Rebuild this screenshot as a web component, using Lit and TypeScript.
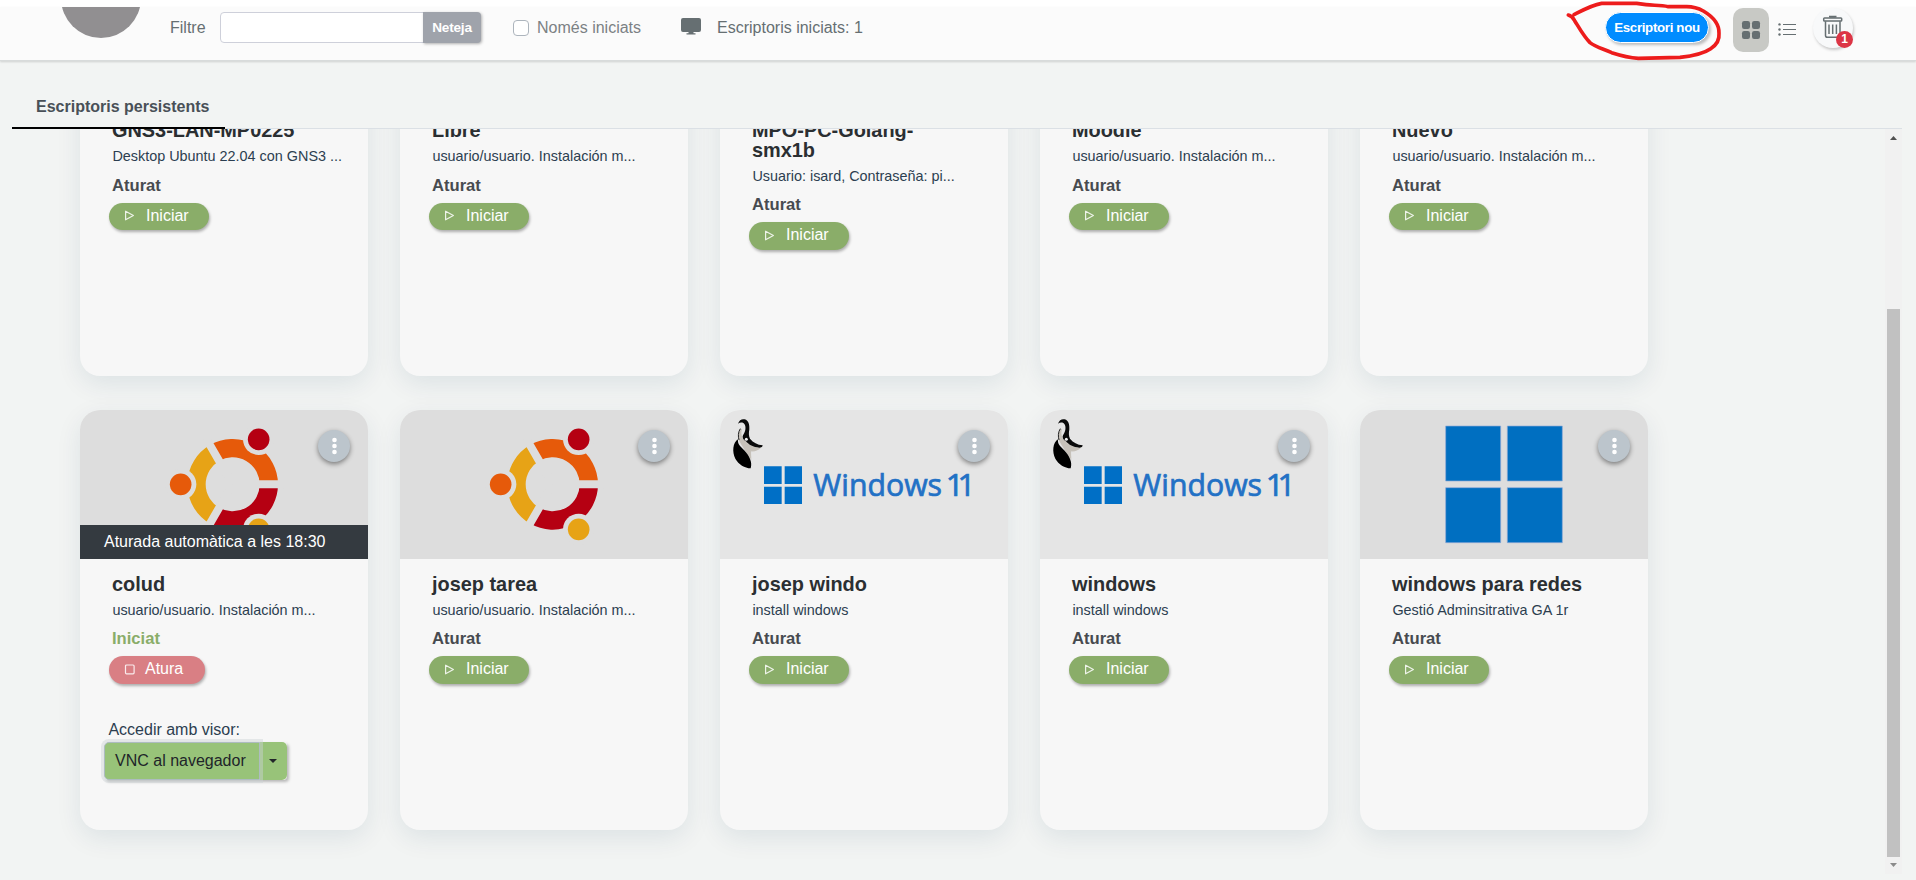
import { LitElement, html, css, svg, nothing } from "lit";
import { customElement, property } from "lit/decorators.js";

type Logo = "ubuntu" | "win11" | "windows";
interface Desktop { name: string; desc: string; logo: Logo; started?: boolean; }

const UU = "usuario/usuario. Instalación m...";
const DESKTOPS: Desktop[] = [
  { name: "GNS3-LAN-MP0225", desc: "Desktop Ubuntu 22.04 con GNS3 ...", logo: "ubuntu" },
  { name: "Libre", desc: UU, logo: "ubuntu" },
  { name: "MPO-PC-Golang-smx1b", desc: "Usuario: isard, Contraseña: pi...", logo: "ubuntu" },
  { name: "Moodle", desc: UU, logo: "ubuntu" },
  { name: "Nuevo", desc: UU, logo: "ubuntu" },
  { name: "colud", desc: UU, logo: "ubuntu", started: true },
  { name: "josep tarea", desc: UU, logo: "ubuntu" },
  { name: "josep windo", desc: "install windows", logo: "win11" },
  { name: "windows", desc: "install windows", logo: "win11" },
  { name: "windows para redes", desc: "Gestió Adminsitrativa GA 1r", logo: "windows" },
];

const ubuntu = svg`
  <rect width="864" height="447" fill="#ddd"/>
  <g fill="none" stroke-width="55">
    <path stroke="#e65a0a" d="M566.5 223A108.5 108.5 0 0 0 403.75 129.04"/>
    <path stroke="#b50012" d="M566.5 223A108.5 108.5 0 0 1 403.75 316.96"/>
    <path stroke="#e7a316" d="M403.75 129.04A108.5 108.5 0 0 0 403.75 316.96"/>
  </g>
  <path stroke="#ddd" stroke-width="24" d="M458 223H610M458 223L378 84.4M458 223L378 361.6"/>
  <g fill="#ddd"><circle cx="536" cy="88" r="47"/><circle cx="302" cy="223" r="47"/><circle cx="536" cy="358" r="47"/></g>
  <circle cx="536" cy="88" r="32.5" fill="#b50012"/>
  <circle cx="302" cy="223" r="32.5" fill="#e65a0a"/>
  <circle cx="536" cy="358" r="32.5" fill="#e7a316"/>`;

const win11 = svg`
  <rect width="864" height="447" fill="#e5e5e5"/>
  <path d="M61 56C55 68 53 82 57 92C68 112 84 134 94 150C94 138 92 128 94 124C104 125 114 122 122 114C106 112 92 104 82 92L68 84C64 76 63 66 66 58Z" fill="#c6c1b9"/>
  <path d="M54 41C58 29 66 26 74 28C86 32 89 44 88 58C86 70 86 78 90 86C100 98 112 104 128 106C128 110 124 113 118 113C100 112 86 104 78 94C69 90 66 82 69 76C77 64 79 50 73 42C68 36 60 37 54 41Z" fill="#0a0a0a"/>
  <path d="M61 56C54 66 54 80 57 90" stroke="#222" stroke-width="3" fill="none"/>
  <path d="M54 88C38 98 36 126 46 146C56 164 74 174 92 175C98 156 88 138 74 122C60 108 52 102 54 88Z" fill="#000"/>
  <circle cx="79" cy="88" r="4.5" fill="#eee"/>
  <path d="M132 169h53v53h-53zM194 169h52v53h-52zM132 230h53v52h-53zM194 230h52v52h-52z" fill="#006fc6"/>
  <text x="280" y="258" font-size="94" textLength="386" lengthAdjust="spacingAndGlyphs">Windows</text>
  <text class="ver" x="677" y="258" font-size="95">11</text>`;

const windows = svg`
  <rect width="864" height="447" fill="#ddd"/>
  <path d="M257 48h165v165H257zM442 48h165v165H442zM257 233h165v165H257zM442 233h165v165H442z" fill="#006fc1" stroke="#8fa9d8" stroke-width="2"/>`;

const LOGOS = { ubuntu, win11, windows };

@customElement("desktop-card")
class DesktopCard extends LitElement {
  @property({ attribute: false }) desktop!: Desktop;
  static styles = css`
    :host { display: block; height: 420px; border-radius: 20px; background: #f7f7f7; box-shadow: 0 8px 26px rgba(0, 60, 90, .09); }
    .pic { position: relative; height: 149px; border-radius: 20px 20px 0 0; overflow: hidden; }
    .art { display: block; width: 288px; height: 149px; }
    .art text { font-family: "Open Sans", "Noto Sans", sans-serif; fill: #2271c5; stroke: #2271c5; stroke-width: 2.2; }
    .art .ver { letter-spacing: -19px; }
    .more { position: absolute; top: 20px; right: 18px; width: 32px; height: 32px; border-radius: 50%; background: #bcc5cc; box-shadow: 0 2px 5px rgba(0, 0, 0, .45); }
    .banner { position: absolute; left: 0; right: 0; bottom: 0; height: 34px; line-height: 33px; padding-left: 24px; background: #343a40; color: #fff; }
    .body { padding: 16px 24px 0 29px; display: flex; flex-direction: column; align-items: flex-start; }
    .name { margin: 0 3px; max-width: 204px; font-weight: 700; font-size: 19.9px; line-height: 19.6px; color: #2b2f32; }
    .desc { margin: 7px 3.4px 0; font-size: 14.4px; line-height: 17px; color: #2c3e50; white-space: nowrap; }
    .state { margin: 10.7px 3px 0; font-size: 16.6px; line-height: 20px; font-weight: 700; color: #474b50; }
    .state.on { color: #8aad69; }
    .act { margin-top: 7px; width: 100px; height: 27.3px; border-radius: 14px; background: #8aad69; color: #fff; box-shadow: 1px 2px 3px rgba(0, 0, 0, .3); display: flex; align-items: center; gap: 11px; padding: 0 0 1px 15px; box-sizing: border-box; line-height: 26px; }
    .act.stop { width: 96px; gap: 10px; background: #d97f84; }
    .ico { width: 11px; height: 11px; fill: none; stroke: #fff; stroke-opacity: .85; stroke-width: 1.2; }
    .visor { margin: 37px 0 0 -.6px; color: #2c3e50; line-height: 18px; }
    .group { display: flex; margin: 3px 0 0 -5px; height: 38px; color: #212529; border-radius: 4px; box-shadow: 2px 2px 3px rgba(0, 0, 0, .25); }
    .vnc { width: 156px; box-sizing: border-box; border: 1px solid #adbcc0; border-radius: 5px 0 0 5px; background: #98c379; line-height: 36px; padding-left: 10px; box-shadow: 0 0 0 3px rgba(205, 210, 213, .45); z-index: 1; }
    .drop { width: 27px; border-radius: 0 5px 5px 0; background: #98c379; display: flex; justify-content: center; align-items: center; }
    .drop::before { content: ""; border: 4px solid transparent; border-top-color: #212529; border-bottom: 0; margin-right: 2px; }
  `;
  render() {
    const d = this.desktop;
    return html`
      <div class="pic">
        <svg class="art" viewBox="0 0 864 447">${LOGOS[d.logo]}</svg>
        <svg class="more" viewBox="0 0 32 32" fill="#fff"><circle cx="16.5" cy="10" r="2.3"/><circle cx="16.5" cy="16" r="2.3"/><circle cx="16.5" cy="22" r="2.3"/></svg>
        ${d.started ? html`<div class="banner">Aturada automàtica a les 18:30</div>` : nothing}
      </div>
      <div class="body">
        <h4 class="name">${d.name}</h4>
        <div class="desc">${d.desc}</div>
        <div class="state ${d.started ? "on" : ""}">${d.started ? "Iniciat" : "Aturat"}</div>
        ${d.started
          ? html`<div class="act stop"><svg class="ico" viewBox="0 0 11 11"><rect x="1.5" y="1" width="8.6" height="8.8" rx="1"/></svg>Atura</div>
              <div class="visor">Accedir amb visor:</div>
              <div class="group"><div class="vnc">VNC al navegador</div><div class="drop"></div></div>`
          : html`<div class="act"><svg class="ico" viewBox="0 0 11 11"><path stroke-linejoin="round" d="M1.6 1.2V9.8L9.4 5.5Z"/></svg>Iniciar</div>`}
      </div>`;
  }
}

@customElement("app-root")
class AppRoot extends LitElement {
  static styles = css`
    :host { display: flex; flex-direction: column; position: relative; width: 1916px; height: 880px; overflow: hidden; background: #f2f4f3; font: 16px/1.2 "Liberation Sans", Arial, sans-serif; color: #666f72; }
    .bar { flex: none; height: 53px; margin-top: 7px; background: #fbfbfb; border-bottom: 1px solid #d8dbdb; box-shadow: 0 1px 2px rgba(0, 0, 0, .15), 0 -8px 0 #fff; display: flex; align-items: flex-start; z-index: 1; }
    .avatar { width: 78px; height: 31px; margin-left: 62px; }
    .lbl { padding-top: 4.5px; line-height: 32px; white-space: nowrap; }
    .filter { margin-left: 30px; width: 50px; }
    .input { margin-top: 5px; width: 204px; height: 31px; box-sizing: border-box; border: 1px solid #ced0da; border-radius: 4px 0 0 4px; background: #fff; }
    .clear { margin: 5px 0 0 -1px; width: 58px; height: 31px; border-radius: 0 4px 4px 0; background: #9fa3ab; color: #fff; font: 700 13.6px/31px "Liberation Sans", sans-serif; letter-spacing: -.2px; text-align: center; box-shadow: 1px 1px 3px rgba(0, 0, 0, .3); }
    .check { margin: 13px 8px 0 32px; width: 16px; height: 16px; box-sizing: border-box; border: 1px solid #adb5bd; border-radius: 4px; background: #fff; }
    .only { width: 144px; color: #7b8184; }
    .screen { width: 20px; height: 17px; margin: 11px 16px 0 0; fill: #666f72; }
    .new { margin: 5px 0 0 auto; width: 104px; height: 31px; box-sizing: border-box; border: 1px solid #fff; border-radius: 16px; background: #008cff; color: #fff; font: 700 13.3px/29px "Liberation Sans", sans-serif; letter-spacing: -.33px; text-align: center; white-space: nowrap; box-shadow: 2px 2px 3px rgba(0, 0, 0, .25); }
    .gridbtn { margin: 1px 0 0 24px; width: 36px; height: 44px; border-radius: 10px; background: #c8c9c5; fill: #666f72; }
    .list { margin: 15px 0 0 9px; width: 18px; height: 15px; }
    .bin { margin: 1px 63px 0 17px; width: 40px; height: 40px; border-radius: 50%; background: #f8f9fa; box-shadow: 1px 2px 3px rgba(0, 0, 0, .2); position: relative; }
    .trash { display: block; width: 40px; height: 40px; }
    .badge { position: absolute; left: 23px; top: 23px; width: 17px; height: 17px; border-radius: 50%; background: #dc3545; color: #fff; font: 700 12px/17px "Liberation Sans", sans-serif; text-align: center; }
    .tabs { flex: none; margin: 0 14px 0 12px; height: 67px; border-bottom: 1px solid #dbe0e5; display: flex; align-items: flex-end; }
    .tab { width: 213px; height: 32px; margin-bottom: -1px; padding-left: 24px; box-sizing: border-box; border-bottom: 2px solid #000; font-weight: 700; color: #495057; position: relative; white-space: nowrap; }
    .main { flex: 1; min-height: 0; display: flex; margin-right: 14px; }
    .scroll { flex: 1; overflow: hidden; display: flex; flex-direction: column; justify-content: flex-end; padding: 0 0 50px 80px; }
    .cards { flex: none; display: grid; grid-template-columns: repeat(5, 288px); column-gap: 32px; row-gap: 33.6px; }
    .track { width: 17px; background: #f1f1f1; height: 745px; display: flex; flex-direction: column; align-items: center; }
    .arrow { width: 17px; height: 17px; flex: none; fill: #505050; }
    .arrow.down { fill: #8b8b8b; }
    .thumb { width: 13px; height: 548px; margin-top: auto; background: #c1c1c1; }
    .mark { position: absolute; left: 1540px; top: 0; width: 200px; height: 64px; z-index: 3; fill: none; stroke: #ed1c1c; stroke-width: 11; stroke-linecap: round; stroke-linejoin: round; }
  `;
  render() {
    return html`
      <header class="bar">
        <svg class="avatar" viewBox="0 0 78 31"><circle cx="39" cy="-9" r="40" fill="#918f91"/></svg>
        <span class="lbl filter">Filtre</span>
        <div class="input"></div><div class="clear">Neteja</div>
        <div class="check"></div><span class="lbl only">Només iniciats</span>
        <svg class="screen" viewBox="0 0 20 17"><path d="M2 0H18Q20 0 20 2V12Q20 14 18 14H12.5V15.2H14.5V16.4H5.5V15.2H7.5V14H2Q0 14 0 12V2Q0 0 2 0Z"/></svg>
        <span class="lbl">Escriptoris iniciats: 1</span>
        <div class="new">Escriptori nou</div>
        <svg class="gridbtn" viewBox="0 0 36 44"><rect x="9" y="13" width="8" height="8" rx="2.2"/><rect x="19" y="13" width="8" height="8" rx="2.2"/><rect x="9" y="23" width="8" height="8" rx="2.2"/><rect x="19" y="23" width="8" height="8" rx="2.2"/></svg>
        <svg class="list" viewBox="0 0 18 15" fill="#666f72"><circle cx="1.5" cy="2.4" r="1.2"/><circle cx="1.5" cy="7.5" r="1.2"/><circle cx="1.5" cy="12.5" r="1.2"/><path d="M5 2h13v1H5zM5 7h13v1H5zM5 12h13v1H5z"/></svg>
        <div class="bin">
          <svg class="trash" viewBox="0 0 40 40" fill="none" stroke="#666f72" stroke-width="1.5"><rect x="10.7" y="10" width="18" height="3" rx=".8"/><path d="M17 9.5V8.7H22.5V9.5" stroke-width="2"/><path d="M12.5 13.2V27.5Q12.5 29.3 14.5 29.3H25Q27 29.3 27 27.5V13.2M16 16.5V26M19.7 16.5V26M23.4 16.5V26"/></svg>
          <span class="badge">1</span>
        </div>
      </header>
      <nav class="tabs"><div class="tab">Escriptoris persistents</div></nav>
      <main class="main">
        <div class="scroll"><div class="cards">${DESKTOPS.map((d) => html`<desktop-card .desktop=${d}></desktop-card>`)}</div></div>
        <div class="track">
          <svg class="arrow" viewBox="0 0 17 17"><path d="M5 11L8.5 7L12 11Z"/></svg>
          <div class="thumb"></div>
          <svg class="arrow down" viewBox="0 0 17 17"><path d="M5 6L8.5 10L12 6Z"/></svg>
        </div>
      </main>
      <svg class="mark" viewBox="0 0 600 192"><path d="M85 45Q96 48 104 62C120 88 132 110 150 128C165 140 190 147 215 158C240 166 265 173 295 175L420 172C455 168 495 158 512 146C532 133 539 120 537 100C538 75 522 52 490 33C470 22 455 20 440 20L385 20C360 14 340 17 318 14L290 10L185 10C155 15 125 32 102 44"/></svg>`;
  }
}
